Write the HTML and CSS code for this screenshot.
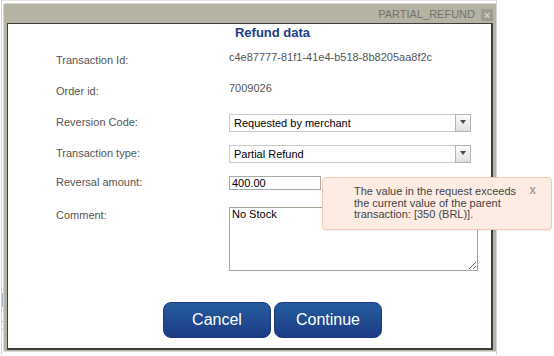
FILE: index.html
```html
<!DOCTYPE html>
<html lang="en">
<head>
    <meta charset="UTF-8">
    <meta name="viewport" content="width=device-width, initial-scale=1.0">
    <title>Refund data</title>
    <link rel="stylesheet" href="styles.css">
</head>
<body>
    <div class="page">
        <div class="page-band"></div>
        <div class="page-line"></div>
        <div class="page-line light"></div>
    </div>

    <div class="dialog">
        <div class="titlebar">
            <span class="title">PARTIAL_REFUND</span>
            <span class="close">&times;</span>
        </div>
        <div class="panel">
            <h1>Refund data</h1>
            <form class="form" id="refundForm">
                <div class="row">
                    <label>Transaction Id:</label>
                    <span class="value">c4e87777-81f1-41e4-b518-8b8205aa8f2c</span>
                </div>
                <div class="row">
                    <label>Order id:</label>
                    <span class="value">7009026</span>
                </div>
                <div class="row">
                    <label>Reversion Code:</label>
                    <div class="select">
                        <span class="select-text">Requested by merchant</span>
                        <span class="select-arrow"></span>
                    </div>
                </div>
                <div class="row">
                    <label>Transaction type:</label>
                    <div class="select">
                        <span class="select-text">Partial Refund</span>
                        <span class="select-arrow"></span>
                    </div>
                </div>
                <div class="row row-tight">
                    <label for="amount">Reversal amount:</label>
                    <div><input type="text" id="amount" name="amount" value="400.00"></div>
                </div>
                <div class="row row-last">
                    <label for="comment">Comment:</label>
                    <div><textarea id="comment" name="comment">No Stock</textarea></div>
                </div>
            </form>
            <div class="actions">
                <button type="button">Cancel</button>
                <button type="submit" form="refundForm">Continue</button>
            </div>

            <div class="tooltip">
                The value in the request exceeds<br>
                the current value of the parent<br>
                transaction: [350 (BRL)].
                <span class="tooltip-close">x</span>
            </div>
        </div>
    </div>
</body>
</html>
```

FILE: styles.css
```css
body {
    margin: 0;
    font-family: "Liberation Sans", Arial, sans-serif;
    font-size: 11px;
    background-color: #fff;
    width: 554px;
    height: 356px;
    overflow: hidden;
}

/* page behind the dialog */
.page {
    width: 496px;
    height: 355px;
    margin-left: 1px;
    border-top: 1px solid #e2e2e2;
    border-left: 1px solid #d2d2d2;
    border-right: 1px solid #d2d2d2;
    padding-top: 292px;
    box-sizing: border-box;
}

.page-band {
    height: 14px;
    background-color: #9fb2d4;
}

.page-line {
    height: 1px;
    margin-top: 14px;
    background-color: #a4a4d6;
}

.page-line.light {
    margin-top: 6px;
    background-color: #d0d0d0;
}

/* dialog */
.dialog {
    position: absolute;
    left: 3px;
    top: 3px;
    width: 494px;
    height: 349px;
    box-sizing: border-box;
    background-color: #b5b3a4;
    border: 1px solid #dad8cf;
    border-radius: 2px;
}

.titlebar {
    height: 19px;
    display: flex;
    justify-content: flex-end;
    align-items: flex-start;
    padding-right: 3px;
}

.title {
    padding-top: 4px;
    line-height: 13px;
    color: #75736a;
}

.close {
    width: 12px;
    height: 12px;
    margin-top: 5px;
    margin-left: 6px;
    background-color: #9d9b8d;
    color: #d4d2c8;
    font-size: 11px;
    font-weight: bold;
    line-height: 12px;
    text-align: center;
}

.panel {
    position: relative;
    width: 486px;
    height: 327px;
    margin-left: 3px;
    box-sizing: border-box;
    background-color: #fff;
    border-style: solid;
    border-color: #3c3c3c;
    border-width: 1px 2px 2px 1px;
}

h1 {
    margin: 1px 0 0;
    padding-left: 46px;
    text-align: center;
    font-size: 13px;
    line-height: 15px;
    color: #1e3d8a;
}

.form {
    margin: 11px 0 0;
    padding-left: 48px;
}

.row {
    display: grid;
    grid-template-columns: 173px auto;
    height: 31px;
}

.row label {
    padding-top: 3px;
    line-height: 13px;
    color: #555;
}

.row-tight label {
    padding-top: 1px;
}

.row-last {
    height: auto;
}

.value {
    line-height: 13px;
    color: #555;
}

.select {
    display: flex;
    width: 242px;
    height: 18px;
    margin-top: 1px;
    box-sizing: border-box;
    border: 1px solid #c9c9c9;
    background-color: #fff;
}

.select-text {
    flex: 1;
    padding-left: 4px;
    line-height: 16px;
    color: #000;
}

.select-arrow {
    position: relative;
    width: 14px;
    margin: -1px -1px -1px 0;
    border: 1px solid #b4b4b4;
    background: linear-gradient(#fbfbfb, #e0e0e0);
}

.select-arrow::after {
    content: "";
    position: absolute;
    left: 4px;
    top: 5px;
    border-left: 3px solid transparent;
    border-right: 3px solid transparent;
    border-top: 4px solid #4a4a4a;
}

input[type="text"] {
    display: block;
    width: 92px;
    height: 14px;
    margin: 1px 0 0;
    padding: 0 2px;
    box-sizing: border-box;
    border: 1px solid #a9a9a9;
    font-family: inherit;
    font-size: 11px;
    color: #000;
}

textarea {
    display: block;
    width: 249px;
    height: 64px;
    margin: 1px 0 0;
    padding: 0 2px;
    box-sizing: border-box;
    border: 1px solid #a6a598;
    font-family: inherit;
    font-size: 11px;
    line-height: 13px;
    color: #000;
}

.actions {
    display: flex;
    justify-content: center;
    gap: 3px;
    margin-top: 31px;
    padding-left: 46px;
}

button {
    width: 108px;
    height: 36px;
    border: 1px solid #1b3a7c;
    border-radius: 8px;
    background: linear-gradient(#245c9e, #1d3b85);
    color: #fff;
    font-family: inherit;
    font-size: 16px;
    cursor: pointer;
}

/* validation message */
.tooltip {
    position: absolute;
    left: 314px;
    top: 153px;
    width: 230px;
    height: 53px;
    box-sizing: border-box;
    padding: 8px 0 0 31px;
    background-color: #fdece4;
    border: 1px solid #f5c8b4;
    border-radius: 4px;
    box-shadow: 0 1px 2px rgba(0, 0, 0, 0.06);
    color: #444;
    line-height: 11.5px;
}

.tooltip-close {
    position: absolute;
    top: 7px;
    right: 15px;
    font-size: 12px;
    font-weight: bold;
    color: #a3a3a3;
}
```
